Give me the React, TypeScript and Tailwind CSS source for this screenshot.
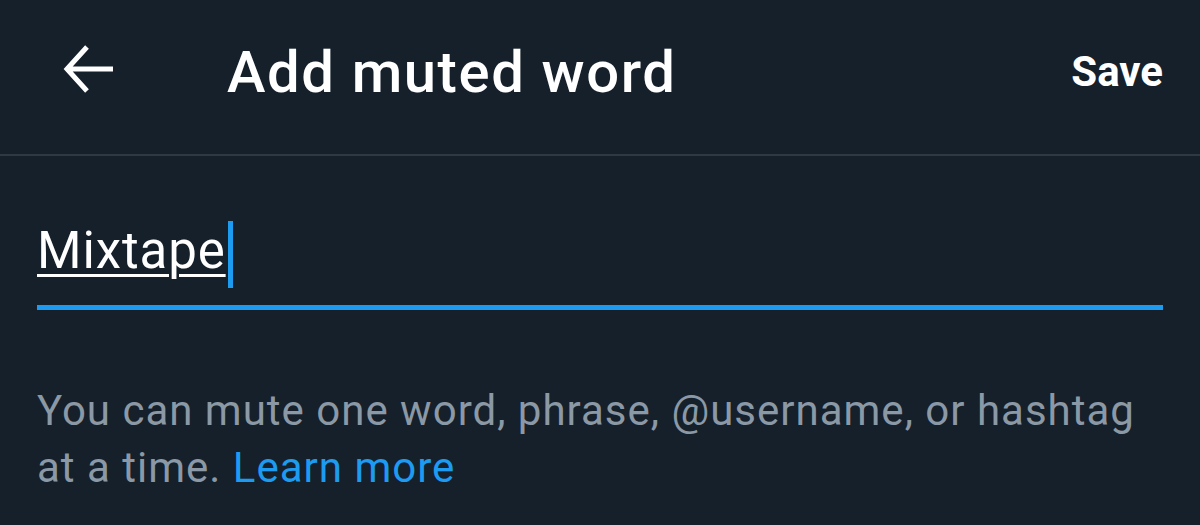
import { useState } from "react";

export default function App() {
  const [word] = useState<string>("Mixtape");

  return (
    <div
      className="w-[1200px] h-[525px] bg-[#15202b] text-white overflow-hidden"
      style={{ fontFamily: "Roboto, 'Noto Sans', sans-serif" }}
    >
      {/* Header */}
      <header className="h-[156px] flex items-center pl-[63px] pr-[37px] border-b-2 border-[#2f3943]">
        <button className="w-[52px] h-[52px] flex items-center justify-center -mt-[16px]">
          <svg width="52" height="52" viewBox="0 0 52 52" fill="none">
            <path
              d="M50 26H5M24 4L4 26L24 48"
              stroke="white"
              strokeWidth="5"
              strokeLinecap="butt"
              strokeLinejoin="miter"
            />
          </svg>
        </button>
        <h1 className="ml-[112px] text-[58px] font-medium tracking-[1.6px] -mt-[10px]">Add muted word</h1>
        <button className="ml-auto text-[42px] font-bold -mt-[12px]">Save</button>
      </header>

      {/* Input */}
      <main className="px-[37px]">
        <div className="pt-[56px] h-[154px] flex flex-col">
          <div className="flex items-end h-[68px]">
            <span className="text-[51px] leading-[58px] tracking-[0.9px] underline decoration-[3px] underline-offset-[6px] decoration-white">
              {word}
            </span>
            <span className="w-[5px] h-[67px] bg-[#1d9bf0] mb-[-8px] ml-[2px]" />
          </div>
          <div className="mt-auto h-[5px] bg-[#1d9bf0]" />
        </div>

        <p className="mt-[72px] max-w-[1126px] text-[42px] leading-[57px] tracking-[1px] text-[#8b98a5]">
          You can mute one word, phrase, @username, or hashtag at a time.{" "}
          <a href="#" className="text-[#1d9bf0]">Learn more</a>
        </p>
      </main>
    </div>
  );
}
